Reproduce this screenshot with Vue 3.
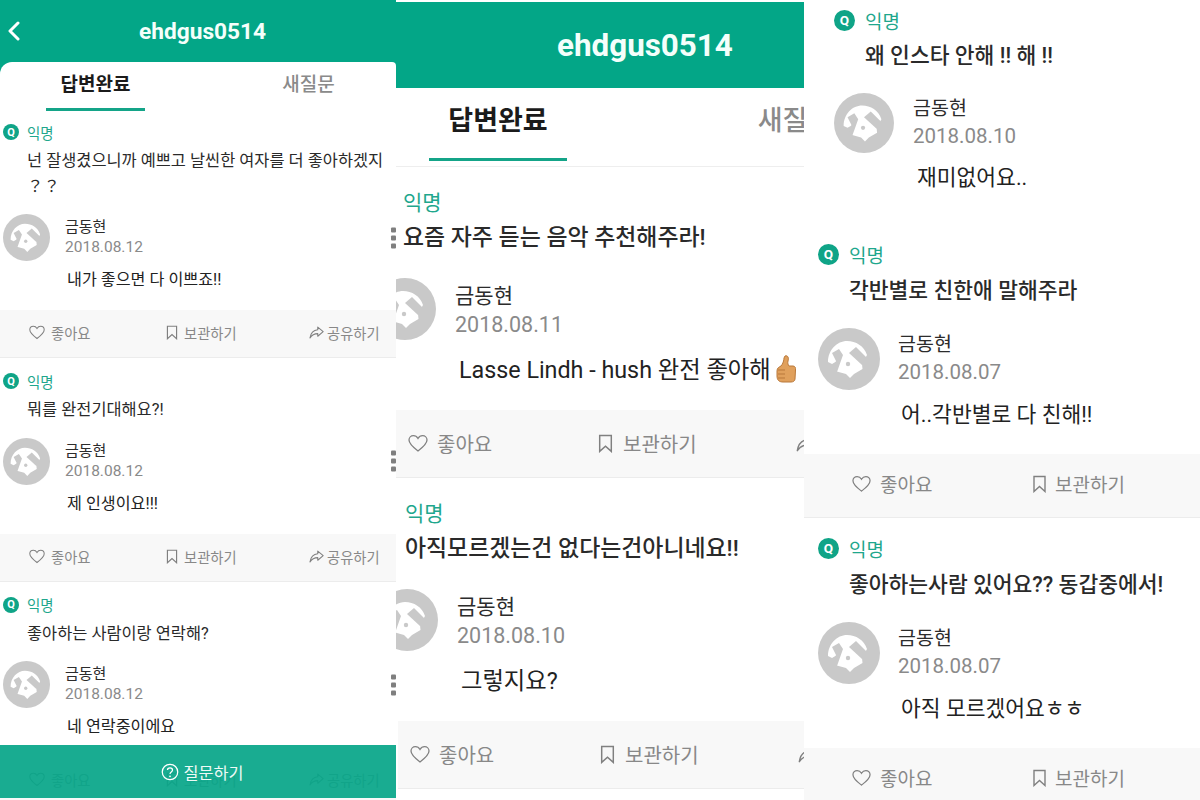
<template>
  <div class="page">
    <section v-for="panel in panels" :key="panel.id" class="panel" :class="'panel-' + panel.id">
      <header v-if="panel.title" class="top">
        <svg v-if="panel.back" class="back" viewBox="0 0 13 20">
          <path d="M11 2 L3 10 L11 18" fill="none" stroke="#fff" stroke-width="3" stroke-linecap="round" stroke-linejoin="round" />
        </svg>
        <h1>{{ panel.title }}</h1>
      </header>

      <div class="sheet">
        <nav v-if="panel.title" class="tabs">
          <span class="tab active">답변완료</span>
          <span class="tab">새질문</span>
        </nav>

        <article v-for="item in panel.items" :key="item.date + item.question" class="item" :class="{ plain: !item.actions }">
          <div class="asker">
            <span class="badge">Q</span>
            <span class="nick">익명</span>
          </div>
          <p class="question">{{ item.question }}</p>
          <div class="profile">
            <svg class="avatar" viewBox="0 0 62 62">
              <circle cx="31" cy="31" r="31" fill="#c9c9c9" />
              <path d="M10 34 C10 22 19 13 29 13 C38 13 46 18 49 27 L44 36 L44.5 41 L36 46 L32 50 L28 46 L17 43 L19 33 L14 36 Z" fill="#fff" />
              <path d="M14 25 L21 21 L25 27 L19 44 L15 44 L18 33 Z" fill="#c9c9c9" />
              <path d="M31 25 L38 19 L50 31 L44 37 Z" fill="#c9c9c9" />
              <circle cx="30" cy="36" r="2.2" fill="#c9c9c9" />
            </svg>
            <div class="meta">
              <div class="name">금동현</div>
              <div class="date">{{ item.date }}</div>
            </div>
            <span v-if="panel.dots" class="dots"><i></i><i></i><i></i></span>
          </div>
          <p class="answer">
            {{ item.answer }}
            <svg v-if="item.thumb" class="thumb" viewBox="0 0 20 28">
              <path d="M9 1 C12 0 13 3 12 6 C11.5 8 12 10 13 11 L17 11 C19 11 20 13 19.5 15 L19 24 C19 26 17 27 15 27 L7 27 C3 27 1 25 1 21 L1 16 C1 13 3 12 5 11 C7 9 8 5 8 3 Z" fill="#e0a05c" stroke="#b9783a" stroke-width="1" />
              <path d="M2 15 H9 M2 19 H9 M2 23 H9" stroke="#b9783a" stroke-width="1" fill="none" />
            </svg>
          </p>
          <div v-if="item.actions" class="actions">
            <span class="action">
              <svg viewBox="0 0 20 18"><path d="M10 16.5 C4 12 1 9 1 5.6 C1 3 3 1.2 5.4 1.2 C7.3 1.2 9 2.3 10 4 C11 2.3 12.7 1.2 14.6 1.2 C17 1.2 19 3 19 5.6 C19 9 16 12 10 16.5 Z" fill="none" stroke="#808080" stroke-width="1.3" /></svg>
              좋아요
            </span>
            <span class="action">
              <svg class="mark" viewBox="0 0 14 18"><path d="M1.5 1.5 H12.5 V16.5 L7 11.5 L1.5 16.5 Z" fill="none" stroke="#808080" stroke-width="1.4" /></svg>
              보관하기
            </span>
            <span v-if="panel.share" class="action">
              <svg class="send" viewBox="0 0 18 16"><path d="M10.5 1.5 L17 7 L10.5 12.5 V9.3 C6.5 9.3 3.5 10.8 1.2 14.5 C2 9 5 5 10.5 4.6 Z" fill="none" stroke="#808080" stroke-width="1.3" stroke-linejoin="round" /></svg>
              공유하기
            </span>
          </div>
        </article>

        <div v-if="panel.ask" class="ask">
          <svg viewBox="0 0 20 20">
            <circle cx="10" cy="10" r="8.6" fill="none" stroke="#fff" stroke-width="1.4" />
            <path d="M7.2 7.8 C7.2 4.6 12.8 4.6 12.8 7.8 C12.8 10 10 9.8 10 12.2" fill="none" stroke="#fff" stroke-width="1.4" />
            <circle cx="10" cy="14.8" r="1" fill="#fff" />
          </svg>
          질문하기
        </div>
      </div>
    </section>
  </div>
</template>

<script setup>
const panels = [
  {
    id: 'a',
    title: 'ehdgus0514',
    back: true,
    dots: true,
    share: true,
    ask: true,
    items: [
      { question: '넌 잘생겼으니까 예쁘고 날씬한 여자를 더 좋아하겠지 ？？', date: '2018.08.12', answer: '내가 좋으면 다 이쁘죠!!', actions: true },
      { question: '뭐를 완전기대해요?!', date: '2018.08.12', answer: '제 인생이요!!!', actions: true },
      { question: '좋아하는 사람이랑 연락해?', date: '2018.08.12', answer: '네 연락중이에요', actions: true }
    ]
  },
  {
    id: 'b',
    title: 'ehdgus0514',
    share: true,
    items: [
      { question: '요즘 자주 듣는 음악 추천해주라!', date: '2018.08.11', answer: 'Lasse Lindh - hush 완전 좋아해', thumb: true, actions: true },
      { question: '아직모르겠는건 없다는건아니네요!!', date: '2018.08.10', answer: '그렇지요?', actions: true }
    ]
  },
  {
    id: 'c',
    items: [
      { question: '왜 인스타 안해 !! 해 !!', date: '2018.08.10', answer: '재미없어요..' },
      { question: '각반별로 친한애 말해주라', date: '2018.08.07', answer: '어..각반별로 다 친해!!', actions: true },
      { question: '좋아하는사람 있어요?? 동갑중에서!', date: '2018.08.07', answer: '아직 모르겠어요ㅎㅎ', actions: true }
    ]
  }
]
</script>

<style>
html,
body {
  background: #fff;
}
</style>

<style scoped>
.page {
  display: flex;
  width: 1200px;
  height: 800px;
  overflow: hidden;
  font-family: Roboto, "Noto Sans CJK KR", sans-serif;
  color: #222;
}

.panel {
  display: flex;
  flex-direction: column;
  height: 800px;
  overflow: hidden;
  background: #fff;
}

.top {
  display: flex;
  align-items: center;
  flex-shrink: 0;
  background: #03a687;
  color: #f4fffb;
}

.top h1 {
  margin: 0;
  font-weight: 700;
}

.sheet {
  position: relative;
  flex: 1;
  overflow: hidden;
  background: #fff;
}

.tabs {
  display: flex;
}

.tab {
  text-align: center;
  color: #8a8a8a;
  font-weight: 500;
}

.tab.active {
  color: #1b1b1b;
  font-weight: 700;
  border-bottom-style: solid;
  border-bottom-color: #14a488;
}

.asker {
  display: flex;
  align-items: center;
}

.badge {
  display: flex;
  align-items: center;
  justify-content: center;
  border-radius: 50%;
  background: #0fa487;
  color: #fff;
  font-weight: 700;
}

.nick {
  color: #1fa78d;
}

.question,
.answer {
  margin: 0;
  font-weight: 400;
}

.question {
  color: #2a2a2a;
}

.profile {
  position: relative;
  display: flex;
  align-items: flex-start;
}

.avatar {
  flex-shrink: 0;
}

.name {
  color: #2c2c2c;
}

.date {
  color: #8a8a8a;
}

.dots {
  position: absolute;
  right: 0;
  top: 50%;
  display: flex;
  flex-direction: column;
  gap: 3px;
  transform: translateY(-50%);
}

.dots i {
  width: 5px;
  height: 5px;
  border-radius: 1px;
  background: #7f7f7f;
}

.actions {
  display: grid;
  align-items: center;
  background: #f8f8f8;
  border-bottom: 1px solid #ececec;
  color: #888;
}

.action {
  display: flex;
  align-items: center;
  white-space: nowrap;
}

.thumb {
  display: inline-block;
  vertical-align: -5px;
}

.ask {
  position: absolute;
  left: 0;
  right: 0;
  bottom: 2px;
  display: flex;
  align-items: center;
  justify-content: center;
  gap: 5px;
  height: 53px;
  padding-left: 8px;
  box-sizing: border-box;
  background: rgba(8, 166, 137, 0.93);
  color: #eefaf6;
  font-size: 16.3px;
}

.ask svg {
  width: 18px;
  height: 18px;
}

/* left capture */
.panel-a {
  width: 396px;
  background: #03a687;
}

.panel-a .top {
  height: 62px;
  padding-left: 7px;
}

.panel-a .back {
  width: 13px;
  height: 20px;
}

.panel-a .top h1 {
  margin-left: 119px;
  font-size: 22.7px;
}

.panel-a .sheet {
  border-radius: 12px 4px 0 0;
}

.panel-a .tabs {
  padding-left: 46px;
  gap: 114px;
  height: 49px;
}

.panel-a .tab {
  width: 99px;
  font-size: 19px;
  line-height: 46px;
}

.panel-a .tab.active {
  height: 46px;
  border-bottom-width: 3px;
}

.panel-a .item {
  padding-top: 13px;
}

.panel-a .item:first-of-type {
  padding-top: 11px;
}

.panel-a .asker {
  padding-left: 3px;
  gap: 8px;
  height: 20px;
}

.panel-a .badge {
  width: 16px;
  height: 16px;
  font-size: 11px;
}

.panel-a .nick {
  font-size: 14.5px;
}

.panel-a .question {
  margin-top: 6px;
  padding: 0 12px 0 27px;
  font-size: 16.4px;
  line-height: 25.5px;
}

.panel-a .profile {
  margin-top: 15px;
  padding-left: 3px;
  gap: 15px;
}

.panel-a .avatar {
  width: 47px;
  height: 47px;
}

.panel-a .meta {
  padding-top: 3px;
}

.panel-a .name {
  font-size: 15px;
  line-height: 20px;
}

.panel-a .date {
  font-size: 15.5px;
  line-height: 20px;
}

.panel-a .answer {
  margin-top: 7px;
  padding-left: 67px;
  font-size: 16.2px;
  line-height: 24px;
}

.panel-a .actions {
  box-sizing: border-box;
  margin-top: 18px;
  height: 48px;
  padding: 0 0 2px 29px;
  grid-template-columns: 137px 143px auto;
  font-size: 14.3px;
}

.panel-a .action svg {
  width: 16px;
  height: 15px;
  margin-right: 6px;
}

.panel-a .action svg.mark {
  width: 12px;
  margin-right: 6px;
}

.panel-a .action svg.send {
  width: 15px;
  margin-right: 3px;
}

/* middle capture */
.panel-b {
  width: 408px;
}

.panel-b .top {
  height: 86px;
  margin-top: 2px;
  padding-left: 161px;
}

.panel-b .top h1 {
  font-size: 31.4px;
}

.panel-b .tabs {
  padding-left: 33px;
  gap: 159px;
  height: 78px;
  border-bottom: 1px solid #eeeeee;
}

.panel-b .tab {
  flex-shrink: 0;
  width: 138px;
  height: 70px;
  font-size: 27px;
  line-height: 66px;
}

.panel-b .tab.active {
  border-bottom-width: 3px;
}

.panel-b .item {
  padding-top: 20px;
}

.panel-b .item:nth-of-type(2) {
  margin-left: 2px;
}

.panel-b .badge {
  display: none;
}

.panel-b .asker {
  padding-left: 7px;
  height: 28px;
}

.panel-b .nick {
  font-size: 21px;
}

.panel-b .question {
  margin-top: 7px;
  padding-left: 7px;
  font-size: 22.9px;
  line-height: 32px;
  font-weight: 500;
}

.panel-b .profile {
  margin: 24px 0 0 -22px;
  gap: 19px;
}

.panel-b .avatar {
  width: 62px;
  height: 62px;
}

.panel-b .meta {
  padding-top: 4px;
}

.panel-b .name {
  font-size: 21px;
  line-height: 28px;
}

.panel-b .date {
  font-size: 21.5px;
  line-height: 30px;
}

.panel-b .answer {
  margin-top: 13px;
  padding-left: 63px;
  font-size: 23.3px;
  line-height: 34px;
  white-space: nowrap;
}

.panel-b .thumb {
  width: 20px;
  height: 28px;
}

.panel-b .actions {
  margin-top: 23px;
  height: 67px;
  padding-left: 12px;
  grid-template-columns: 190px 198px auto;
  font-size: 20px;
}

.panel-b .action svg {
  width: 20px;
  height: 19px;
  margin-right: 9px;
}

.panel-b .action svg.mark {
  width: 15px;
  margin-right: 10px;
}

.panel-b .action svg.send {
  width: 20px;
}

/* right capture */
.panel-c {
  width: 396px;
}

.panel-c .item {
  padding-top: 18px;
}

.panel-c .item:first-of-type {
  margin-left: 16px;
  padding-top: 8px;
}

.panel-c .item.plain {
  padding-bottom: 31px;
}

.panel-c .item.plain .question {
  margin-top: 10px;
}

.panel-c .item.plain .avatar {
  width: 60px;
  height: 60px;
}

.panel-c .item.plain .profile {
  gap: 19px;
}

.panel-c .item.plain .meta {
  padding-top: 3px;
}

.panel-c .asker {
  padding-left: 14px;
  gap: 10px;
  height: 24px;
}

.panel-c .badge {
  width: 21px;
  height: 21px;
  font-size: 13.5px;
}

.panel-c .nick {
  font-size: 19px;
}

.panel-c .question {
  margin-top: 11px;
  padding-left: 45px;
  font-size: 21.5px;
  line-height: 28px;
  font-weight: 500;
}

.panel-c .profile {
  margin-top: 23px;
  padding-left: 14px;
  gap: 18px;
}

.panel-c .avatar {
  width: 62px;
  height: 62px;
}

.panel-c .meta {
  padding-top: 4px;
}

.panel-c .name {
  font-size: 19.5px;
  line-height: 26px;
}

.panel-c .date {
  font-size: 20.5px;
  line-height: 28px;
}

.panel-c .answer {
  margin-top: 10px;
  padding-left: 97px;
  font-size: 21.5px;
  line-height: 30px;
}

.panel-c .actions {
  box-sizing: border-box;
  margin-top: 24px;
  height: 64px;
  padding: 0 0 4px 48px;
  grid-template-columns: 180px auto;
  font-size: 19px;
}

.panel-c .action svg {
  width: 19px;
  height: 18px;
  margin-right: 9px;
}

.panel-c .action svg.mark {
  width: 15px;
  margin-right: 8px;
}
</style>
